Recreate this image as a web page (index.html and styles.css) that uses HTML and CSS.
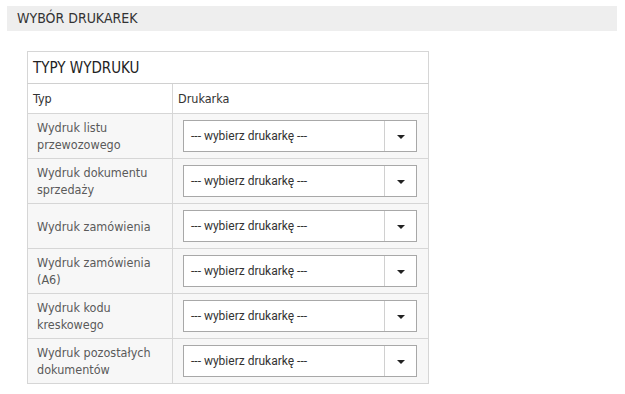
FILE: index.html
```html
<!DOCTYPE html>
<html lang="pl">
<head>
<meta charset="utf-8">
<title>Wybór drukarek</title>
<link rel="stylesheet" href="styles.css">
</head>
<body>
<div class="page-header">WYBÓR DRUKAREK</div>
<div class="panel">
  <table class="printers">
    <thead>
      <tr class="title-row"><th colspan="2">TYPY WYDRUKU</th></tr>
      <tr class="head-row"><th class="col-type">Typ</th><th class="col-printer">Drukarka</th></tr>
    </thead>
    <tbody>
      <tr><td class="label">Wydruk listu<br>przewozowego</td><td class="cell"><div class="select"><span class="select-text">--- wybierz drukarkę ---</span><span class="select-btn"><span class="caret"></span></span></div></td></tr>
      <tr><td class="label">Wydruk dokumentu<br>sprzedaży</td><td class="cell"><div class="select"><span class="select-text">--- wybierz drukarkę ---</span><span class="select-btn"><span class="caret"></span></span></div></td></tr>
      <tr><td class="label">Wydruk zamówienia</td><td class="cell"><div class="select"><span class="select-text">--- wybierz drukarkę ---</span><span class="select-btn"><span class="caret"></span></span></div></td></tr>
      <tr><td class="label">Wydruk zamówienia<br>(A6)</td><td class="cell"><div class="select"><span class="select-text">--- wybierz drukarkę ---</span><span class="select-btn"><span class="caret"></span></span></div></td></tr>
      <tr><td class="label">Wydruk kodu<br>kreskowego</td><td class="cell"><div class="select"><span class="select-text">--- wybierz drukarkę ---</span><span class="select-btn"><span class="caret"></span></span></div></td></tr>
      <tr><td class="label">Wydruk pozostałych<br>dokumentów</td><td class="cell"><div class="select"><span class="select-text">--- wybierz drukarkę ---</span><span class="select-btn"><span class="caret"></span></span></div></td></tr>
    </tbody>
  </table>
</div>
</body>
</html>
```
FILE: styles.css
```css
html, body {
  background: #fff;
}
body {
  margin: 6px 8px 0 7px;
  font-family: "DejaVu Sans Condensed", "DejaVu Sans", sans-serif;
  color: #333;
}
.page-header {
  background: #eeeeee;
  height: 25px;
  line-height: 25px;
  padding-left: 10px;
  font-size: 14px;
  color: #333;
}
.panel {
  margin-top: 20px;
  margin-left: 20px;
  width: 402px;
}
.printers {
  width: 402px;
  border-collapse: collapse;
  border: 1px solid #bdbdbd;
}
.printers th, .printers td {
  border: 1px solid #d6d6d6;
  padding: 0;
  text-align: left;
  font-weight: normal;
}
.title-row th {
  height: 31px;
  padding-left: 5px;
  font-size: 15px;
  color: #222;
  border-bottom-color: #d0d0d0;
}
.head-row th {
  height: 29px;
  font-size: 12.5px;
  color: #333;
}
.col-type {
  width: 139px;
  padding-left: 5px !important;
}
.col-printer {
  padding-left: 5px !important;
}
tbody tr {
  background: #f7f7f7;
  height: 45px;
}
.label {
  padding-left: 9px !important;
  font-size: 12.5px;
  line-height: 17px;
  color: #5a5a5a;
}
.cell {
  padding: 0 10px 0 10px !important;
}
.select {
  display: flex;
  height: 30px;
  width: 232px;
  border: 1px solid #a8a8a8;
  background: #fff;
  font-family: "Roboto", "Liberation Sans", sans-serif;
  font-size: 12px;
  color: #333;
}
.select-text {
  flex: 1;
  display: flex;
  align-items: center;
  padding-left: 7px;
}
.select-btn {
  width: 31px;
  border-left: 1px solid #d0d0d0;
  display: flex;
  align-items: center;
  justify-content: center;
}
.caret {
  width: 0;
  height: 0;
  border-left: 4px solid transparent;
  border-right: 4px solid transparent;
  border-top: 4px solid #222;
  margin-top: 1px;
}
```
